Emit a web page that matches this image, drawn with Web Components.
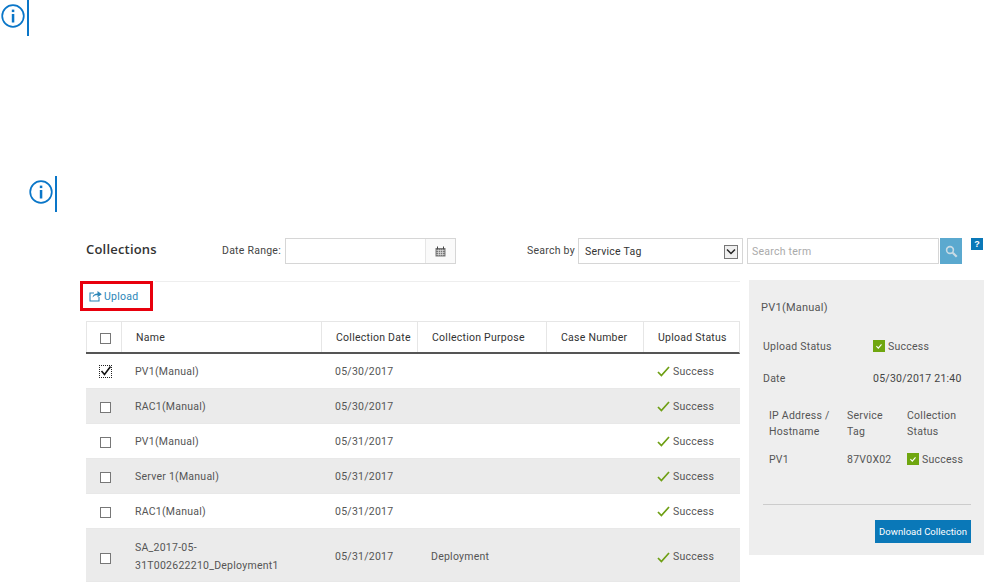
<!DOCTYPE html>
<html><head><meta charset="utf-8"><style>
html,body{margin:0;padding:0;background:#fff}
body{width:988px;height:584px;overflow:hidden;font-family:Roboto,"Liberation Sans",sans-serif;font-size:10.5px;color:#444}
info-note{margin-left:1px}
info-note.second{margin:140px 0 0 29px}
col-app{margin:26px 0 0 80px}
</style></head><body>
<info-note></info-note>
<info-note class="second"></info-note>
<col-app>
  <col-toolbar></col-toolbar>
  <div style="display:flex;align-items:flex-start;gap:9px;width:904px">
    <col-list></col-list>
    <detail-panel></detail-panel>
  </div>
</col-app>
<script>
const def=(n,html,init)=>customElements.define(n,class extends HTMLElement{constructor(){super();this.attachShadow({mode:'open'}).innerHTML=html;}connectedCallback(){init&&init(this.shadowRoot,this)}});
const tick='<svg width="13" height="11" viewBox="0 0 13 11"><path d="M1 6l3.4 3.6L12 1" fill="none" stroke="#6e9f14" stroke-width="1.7"/></svg>';
const greenBox='<svg width="12" height="12" viewBox="0 0 12 12"><rect width="12" height="12" fill="#6fa60f"/><path d="M3.4 6.2l1.9 1.9 3.2-3.8" fill="none" stroke="#fff" stroke-width="1.1"/></svg>';
def('info-note',`<style>:host{display:flex;width:max-content;height:36px;align-items:center;gap:2px}
.b{width:2px;height:100%;background:#0a76c8}svg{display:block;margin-top:-5px}</style>
<svg width="24" height="24" viewBox="0 0 24 24"><circle cx="12" cy="12" r="10.8" fill="none" stroke="#0a76c8" stroke-width="1.7"/><rect x="10.8" y="10" width="2.5" height="8.5" fill="#0a76c8"/><rect x="10.8" y="5.6" width="2.5" height="2.5" fill="#0a76c8"/></svg><div class="b"></div>`);
def('col-app',`<style>:host{display:block}</style><slot></slot>`);
def('col-toolbar',`<style>:host{display:flex;height:26px;width:904px;box-sizing:border-box;padding-left:6px;align-items:flex-start;font:10.5px Roboto,sans-serif;color:#444;letter-spacing:.25px}
.t{width:136px;font:600 13px/22px "Open Sans",sans-serif;color:#333;letter-spacing:.2px}
label{line-height:25px;width:63px}
.date{width:171px;height:26px;box-sizing:border-box;border:1px solid #d6d6d6;display:flex;justify-content:flex-end}
.cal{width:29px;border-left:1px solid #e6e6e6;background:#fafafa;display:flex;align-items:center;justify-content:center}
.sb{margin-left:71px;width:51px;line-height:25px}
.sel{width:165px;height:26px;box-sizing:border-box;border:1px solid #d6d6d6;display:flex;align-items:center;justify-content:space-between;padding:1px 4px 0 6px;color:#333}
.arrow{width:14px;height:14px;box-sizing:border-box;border:1px solid #777;background:#efefef;display:flex;align-items:center;justify-content:center}
.term{margin-left:4px;width:192px;height:26px;box-sizing:border-box;border:1px solid #d6d6d6;color:#aaa;line-height:25px;padding-left:4px}
.go{margin-left:1px;width:22px;height:26px;background:#5ba9cf;display:flex;align-items:center;justify-content:center}
.help{margin-left:9px;width:12px;height:12px;background:#0a78b8;color:#fff;font:bold 9px/12px "Liberation Sans",sans-serif;text-align:center;letter-spacing:0}
</style><div class="t">Collections</div><label>Date Range:</label>
<div class="date"><div class="cal"><svg width="11" height="11" viewBox="0 0 11 11"><path d="M.5 2h10v8.5H.5z" fill="#777"/><path d="M1.5 4.5h8M1.5 6.5h8M1.5 8.5h8M3.5 3.5v6M5.5 3.5v6M7.5 3.5v6" stroke="#ddd" stroke-width=".7"/><path d="M2.5.5v2.5M8.5.5v2.5" stroke="#444"/></svg></div></div>
<div class="sb">Search by</div>
<div class="sel">Service Tag<div class="arrow"><svg width="10" height="7" viewBox="0 0 10 7"><path d="M1 1.5l4 4 4-4" fill="none" stroke="#222" stroke-width="1.5"/></svg></div></div>
<div class="term">Search term</div>
<div class="go"><svg width="13" height="13" viewBox="0 0 13 13"><circle cx="5" cy="5" r="3.4" fill="none" stroke="#c8dbe5" stroke-width="1.6"/><path d="M7.7 7.7l4 4" stroke="#c8dbe5" stroke-width="2.2"/></svg></div>
<div class="help">?</div>`);
const cols='35px 200px 96px 129px 97px 97px';
def('col-list',`<style>:host{display:block;width:660px;font:10.5px Roboto,sans-serif;letter-spacing:.25px;color:#555}
.top{display:flex;height:40px;align-items:flex-start;margin-top:17px}
.up{width:73px;height:30px;box-sizing:border-box;border:3px solid #e8000d;display:flex;align-items:center;gap:2px;padding-left:6px;color:#2b86b8}
.rule{flex:1;height:1px;background:#eee;margin-left:2px}
.tb{margin-left:6px;width:654px;box-sizing:border-box;border:solid #e6e6e6;border-width:1px 0 0 0}
.h,.r{display:grid;grid-template-columns:${cols};align-items:center}
.h{border-bottom:2px solid #555;color:#333;border-right:1px solid #e6e6e6;width:654px;box-sizing:border-box;height:32px}
.h>div{height:100%;display:flex;align-items:center;border-left:1px solid #e6e6e6;box-sizing:border-box;padding-left:14px}
.h>div:first-child{padding-left:13px}
.r{height:35px;border-bottom:1px solid #e8e8e8;box-sizing:border-box}
.r.g{background:#ebebeb}.r.tall{height:53px;line-height:18px;padding-top:4px}
.r>div{padding-left:14px}.r>.st{display:flex;align-items:center;gap:3px}
.cb{width:11px;height:11px;box-sizing:border-box;border:1px solid #777;background:#fff;display:block;margin-top:2px}
.cell{display:flex;align-items:center}
.chk{position:relative;width:11px;height:11px;outline:1px dotted #222;display:block}
.chk svg{position:absolute;left:0;top:-1px}
</style>
<div class="top"><div class="up"><svg width="13" height="12" viewBox="0 0 13 12"><path d="M5 3H1v8h9V7" fill="none" stroke="#2b86b8" stroke-width="1.1"/><path d="M3.500 7.500C4 4.500 6 3.500 8.500 3.500V1L12.800 4.200 8.500 7.200V5C6.500 5 5 5.800 3.500 7.500Z" fill="#2b86b8"/></svg>Upload</div><div class="rule"></div></div>
<div class="tb"><div class="h"><div><span class="cb"></span></div><div>Name</div><div>Collection Date</div><div>Collection Purpose</div><div>Case Number</div><div>Upload Status</div></div><div id="b"></div></div>`,
(s)=>{const rows=[['PV1(Manual)','05/30/2017','',1],['RAC1(Manual)','05/30/2017'],['PV1(Manual)','05/31/2017'],['Server 1(Manual)','05/31/2017'],['RAC1(Manual)','05/31/2017'],['SA_2017-05-<br>31T002622210_Deployment1','05/31/2017','Deployment']];
s.getElementById('b').innerHTML=rows.map((r,i)=>`<div class="r ${i%2?'g':''} ${i==5?'tall':''}"><div class="cell">${r[3]?'<span class="chk"><svg width="12" height="12" viewBox="0 0 12 12"><path d="M1.500 6l3 3.500L10.500 1.500" fill="none" stroke="#111" stroke-width="1.600"/></svg></span>':'<span class="cb"></span>'}</div><div>${r[0]}</div><div>${r[1]}</div><div>${r[2]||''}</div><div></div><div class="st">${tick}<span>Success</span></div></div>`).join('')});
def('detail-panel',`<style>:host{display:block;width:235px;height:275px;margin-top:16px;background:#eee;box-sizing:border-box;padding:20px 13px 0 14px;font:10.5px Roboto,sans-serif;letter-spacing:.25px;color:#555;}
.t{font-size:11px;margin-left:-2px;height:39px;line-height:16px}
.kv{display:grid;grid-template-columns:110px 1fr;height:32px;align-items:start;line-height:16px}
.s{display:flex;align-items:center;gap:3px}.s svg{display:block;margin-top:-2px}
.g{display:grid;grid-template-columns:78px 60px 1fr;padding-left:6px;line-height:16px;margin-top:5px}
.g>div:nth-child(n+4){padding-top:12px}
hr{border:0;border-top:1px solid #ccc;margin:36px 0 0 0}
.btn{margin:15px 0 0 auto;width:96px;height:23px;background:#0a78b8;color:#fff;text-align:center;line-height:23px;font-size:9.5px;letter-spacing:.05px}
</style><div class="t">PV1(Manual)</div>
<div class="kv"><div>Upload Status</div><div class="s">${greenBox}Success</div></div>
<div class="kv"><div>Date</div><div style="color:#444">05/30/2017 21:40</div></div>
<div class="g"><div>IP Address /<br>Hostname</div><div>Service<br>Tag</div><div>Collection<br>Status</div><div>PV1</div><div>87V0X02</div><div class="s">${greenBox}Success</div></div>
<hr><div class="btn">Download Collection</div>`);
</script>
</body></html>
